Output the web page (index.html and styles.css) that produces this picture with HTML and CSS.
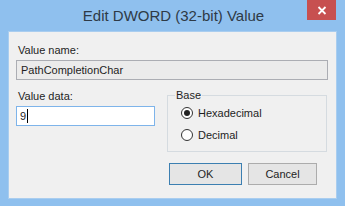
FILE: index.html
```html
<!DOCTYPE html>
<html lang="en">
  <head>
    <meta charset="UTF-8" />
    <title>Edit DWORD (32-bit) Value</title>
    <link rel="stylesheet" href="styles.css">
  </head>
  <body>
    <div class="window">
      <div class="titlebar">
        <span class="title">Edit DWORD (32-bit) Value</span>
        <button class="close" aria-label="Close">
          <svg width="10" height="9" viewBox="0 0 10 9">
            <path d="M1.5 1 L8.5 8 M8.5 1 L1.5 8" stroke="#fff" stroke-width="1.8" />
          </svg>
        </button>
      </div>

      <div class="client">
        <div class="label name-label">Value name:</div>
        <div class="field readonly">PathCompletionChar</div>

        <div class="middle">
          <div class="data-col">
            <div class="label">Value data:</div>
            <div class="field focused">9<span class="caret"></span></div>
          </div>

          <fieldset class="base">
            <legend>Base</legend>
            <div class="radio">
              <span class="dot checked"></span>
              <span>Hexadecimal</span>
            </div>
            <div class="radio">
              <span class="dot"></span>
              <span>Decimal</span>
            </div>
          </fieldset>
        </div>

        <div class="buttons">
          <button class="btn default ok">OK</button>
          <button class="btn cancel">Cancel</button>
        </div>
      </div>
    </div>
  </body>
</html>
```

FILE: styles.css
```css
* {
  margin: 0;
  padding: 0;
  box-sizing: border-box;
  font-family: "Liberation Sans", Arial, sans-serif;
}

body {
  background-color: #8fc0ee;
}

.window {
  width: 345px;
  height: 206px;
  background-color: #8fc0ee;
  padding: 0 8px 7px 8px;
  display: flex;
  flex-direction: column;
}

.titlebar {
  position: relative;
  height: 31px;
  display: flex;
  justify-content: center;
  align-items: center;
}

.title {
  font-size: 15px;
  color: #2e3a46;
  margin-top: -1px;
  margin-left: 2px;
}

.close {
  position: absolute;
  top: 0;
  right: 1px;
  width: 29px;
  height: 20px;
  border: none;
  background-color: #c75050;
  display: flex;
  justify-content: center;
  align-items: center;
}

.client {
  flex: 1;
  background-color: #f0f0f0;
  border: 1px solid #a9cdef;
  padding: 0 8px 0 7px;
  font-size: 11px;
  color: #1e1e1e;
}

.label {
  line-height: 15px;
  padding-left: 2px;
}

.name-label {
  padding-top: 11px;
}

.field {
  margin-top: 2px;
  height: 20px;
  border: 1px solid #abadb3;
  line-height: 18px;
  padding-left: 4px;
  display: flex;
  align-items: center;
}

.readonly {
  width: 312px;
  background-color: #ebebeb;
}

.focused {
  width: 139px;
  background-color: #fff;
  border-color: #7eb4ea;
  padding-left: 3px;
}

.caret {
  display: inline-block;
  width: 1px;
  height: 14px;
  background-color: #000;
  margin-left: 1px;
}

.middle {
  display: flex;
  gap: 12px;
  align-items: flex-start;
}

.data-col {
  margin-top: 9px;
  width: 139px;
}

.base {
  margin-top: 9px;
  width: 160px;
  height: 63px;
  border: 1px solid #d5dbe0;
  padding: 0 0 0 13px;
}

.base legend {
  font-size: 11px;
  line-height: 13px;
  padding: 0 1px;
  margin-left: -6px;
}

.radio {
  display: flex;
  align-items: center;
  gap: 5px;
  height: 22px;
}

.dot {
  width: 12px;
  height: 12px;
  border: 1px solid #333;
  border-radius: 50%;
  background-color: #fff;
  display: flex;
  justify-content: center;
  align-items: center;
}

.dot.checked::after {
  content: "";
  width: 6px;
  height: 6px;
  border-radius: 50%;
  background-color: #222;
}

.buttons {
  display: flex;
  justify-content: flex-end;
  gap: 6px;
  margin-top: 11px;
  padding-right: 11px;
}

.btn {
  height: 22px;
  font-size: 11px;
  color: #1e1e1e;
  background-color: #e5e5e5;
  border: 1px solid #acacac;
}

.ok {
  width: 73px;
}

.cancel {
  width: 69px;
}

.default {
  border-color: #3c7fb1;
}
```
